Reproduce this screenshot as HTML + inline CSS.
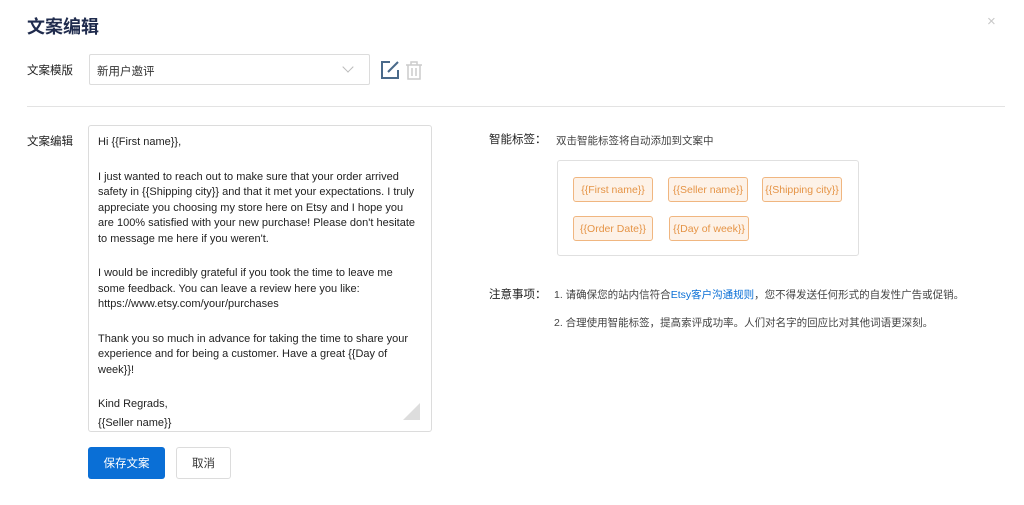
<!DOCTYPE html>
<html><head><meta charset="utf-8"><style>
*{margin:0;padding:0;box-sizing:border-box}
body{width:1024px;height:505px;background:#fff;font-family:"Liberation Sans","Noto Sans CJK SC",sans-serif;position:relative;overflow:hidden;color:#333}
.a{position:absolute}
.title{left:27px;top:13px;font-size:18px;font-weight:bold;color:#1f2b4d}
.lbl{font-size:11.5px;color:#222}
.sel{left:89px;top:54px;width:281px;height:31px;border:1px solid #dcdcdc;border-radius:2px;font-size:11.5px;padding:8px 7px;color:#333}
.ta{left:88px;top:125px;width:344px;height:307px;border:1px solid #dcdcdc;border-radius:3px;font-size:11px;line-height:15.5px;padding:9px 9px;color:#222}
.ta p{margin-bottom:19px}
.tag{position:absolute;height:25px;border:1px solid #f0b680;background:#fdf2e8;border-radius:3px;color:#e59446;font-size:10.5px;display:flex;align-items:center;justify-content:center}
.btn{position:absolute;height:32px;border-radius:3px;font-size:11.5px;display:flex;align-items:center;justify-content:center}
</style></head><body>
<div class="a title">文案编辑</div>
<div class="a" style="left:987px;top:13px;font-size:15px;color:#c8c8c8">×</div>
<div class="a lbl" style="left:27px;top:62px">文案模版</div>
<div class="a sel">新用户邀评<span style="position:absolute;right:17px;top:8px;width:8px;height:8px;border-right:1px solid #bbb;border-bottom:1px solid #bbb;transform:rotate(45deg)"></span></div>
<svg class="a" style="left:380px;top:60px" width="20" height="20" viewBox="0 0 20 20" fill="none" stroke="#4a6a8a" stroke-width="2"><path d="M10 2H2v16h16v-8"/><path d="M8 12l10-10"/></svg>
<svg class="a" style="left:405px;top:61px" width="18" height="19" viewBox="0 0 18 19" fill="none" stroke="#ccc" stroke-width="1.5"><path d="M1 4h16M6 4V1h6v3M3 4v14h12V4M7 7v8M11 7v8"/></svg>
<div class="a" style="left:27px;top:106px;width:978px;height:1px;background:#e3e3e3"></div>
<div class="a lbl" style="left:27px;top:133px">文案编辑</div>
<div class="a ta">
<p>Hi {{First name}},</p>
<p>I just wanted to reach out to make sure that your order arrived safety in {{Shipping city}} and that it met your expectations. I truly appreciate you choosing my store here on Etsy and I hope you are 100% satisfied with your new purchase! Please don't hesitate to message me here if you weren't.</p>
<p>I would be incredibly grateful if you took the time to leave me some feedback. You can leave a review here you like: https://www.etsy.com/your/purchases</p>
<p style="margin-bottom:17px">Thank you so much in advance for taking the time to share your experience and for being a customer. Have a great {{Day of week}}!</p>
<p style="margin:0;line-height:19px">Kind Regrads,<br>{{Seller name}}</p>
<div style="position:absolute;right:11px;bottom:11px;width:0;height:0;border-left:17px solid transparent;border-bottom:17px solid #ddd"></div>
</div>
<div class="btn" style="left:88px;top:447px;width:77px;background:#0a6fd6;color:#fff">保存文案</div>
<div class="btn" style="left:176px;top:447px;width:55px;border:1px solid #dcdcdc;color:#333">取消</div>
<div class="a lbl" style="left:489px;top:131px">智能标签：</div>
<div class="a" style="left:556px;top:133px;font-size:10.5px;color:#444">双击智能标签将自动添加到文案中</div>
<div class="a" style="left:557px;top:160px;width:302px;height:96px;border:1px solid #e0e0e0;border-radius:3px"></div>
<div class="tag" style="left:573px;top:177px;width:80px">{{First name}}</div>
<div class="tag" style="left:668px;top:177px;width:80px">{{Seller name}}</div>
<div class="tag" style="left:762px;top:177px;width:80px">{{Shipping city}}</div>
<div class="tag" style="left:573px;top:216px;width:80px">{{Order Date}}</div>
<div class="tag" style="left:669px;top:216px;width:80px">{{Day of week}}</div>
<div class="a lbl" style="left:489px;top:286px">注意事项：</div>
<div class="a" style="left:554px;top:287px;font-size:10.5px;color:#444">1. 请确保您的站内信符合<span style="color:#0a6fd6">Etsy客户沟通规则</span>，您不得发送任何形式的自发性广告或促销。</div>
<div class="a" style="left:554px;top:315px;font-size:10.5px;color:#444">2. 合理使用智能标签，提高索评成功率。人们对名字的回应比对其他词语更深刻。</div>
</body></html>
